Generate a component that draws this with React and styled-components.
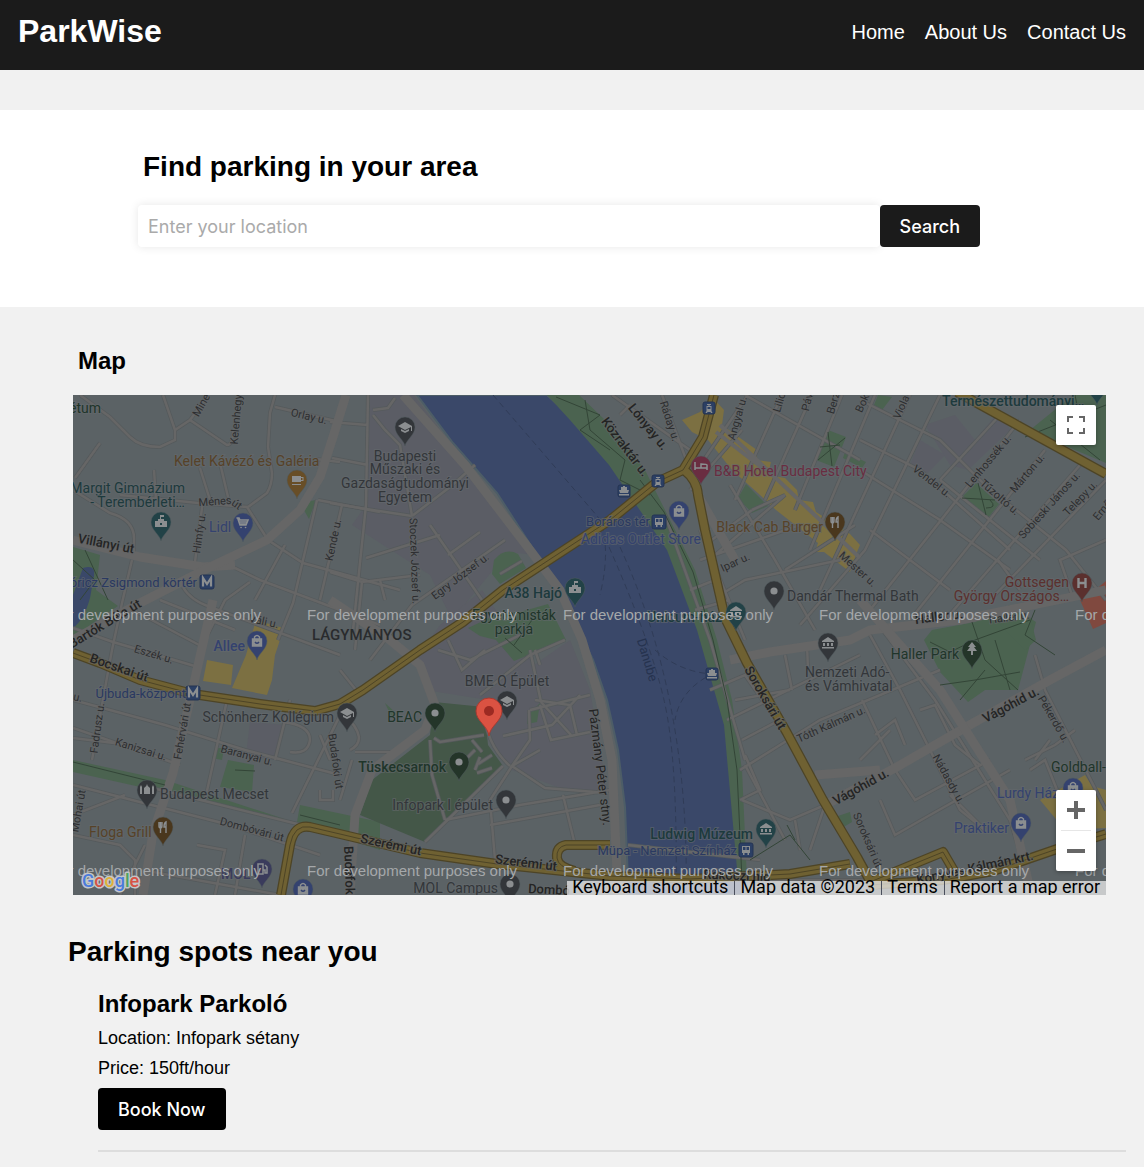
import React from "react";
import styled, { createGlobalStyle } from "styled-components";

const GlobalStyle = createGlobalStyle`
  * { box-sizing: border-box; }
  body {
    margin: 0;
    background: #f1f1f1;
    color: #000;
    font-family: "Liberation Sans", Arial, sans-serif;
  }
  h1, h2, h3, p, ul { margin: 0; padding: 0; }
`;

const Header = styled.header`
  display: flex;
  justify-content: space-between;
  align-items: flex-start;
  min-height: 70px;
  padding: 12px 18px;
  background: #1b1b1b;
  color: #fff;
`;
const Brand = styled.h1`
  font-size: 32px;
  line-height: 38px;
`;
const Nav = styled.nav`
  display: flex;
  gap: 20px;
`;
const NavLink = styled.a`
  color: #fff;
  font-size: 20px;
  line-height: 40px;
  text-decoration: none;
`;

const Hero = styled.section`
  margin-top: 40px;
  padding: 40px 164px 60px 138px;
  background: #fff;
`;
const SectionTitle = styled.h2`
  font-size: 28px;
  line-height: 34px;
`;
const HeroTitle = styled(SectionTitle)`
  margin: 0 0 21px 5px;
`;
const SearchForm = styled.form`
  display: flex;
`;
const LocationInput = styled.input`
  flex: 1;
  min-width: 0;
  height: 42px;
  padding: 0 10px;
  border: 0;
  border-radius: 4px;
  background: #fff;
  box-shadow: 0 0 10px rgba(0, 0, 0, 0.1);
  font-family: Inter, sans-serif;
  font-size: 18px;
  &::placeholder { color: #aaa; opacity: 1; }
`;
const Button = styled.button`
  position: relative;
  height: 42px;
  padding: 0 20px;
  border: 0;
  border-radius: 4px;
  background: ${(p) => p.$tone};
  color: #fff;
  font-family: Inter, sans-serif;
  font-size: 18px;
  font-weight: 500;
  cursor: pointer;
`;

const MapSection = styled.section`
  padding: 38px 38px 0 73px;
`;
const MapTitle = styled.h2`
  margin: 0 0 18px 5px;
  font-size: 24px;
  line-height: 32px;
`;
const MapFrame = styled.div`
  position: relative;
  overflow: hidden;
  background: #5b6265;
`;
const MapCanvas = styled.svg`
  display: block;
  width: 100%;
  height: 500px;
  font-family: Roboto, sans-serif;
`;
const ControlBox = styled.div`
  position: absolute;
  right: 10px;
  ${(p) => (p.$top ? "top: 10px;" : "bottom: 24px;")}
  width: 40px;
  border-radius: 2px;
  background: #fff;
  box-shadow: 0 1px 4px rgba(0, 0, 0, 0.3);
`;
const ControlButton = styled.button`
  display: grid;
  place-items: center;
  width: 40px;
  height: 40px;
  padding: 0;
  border: 0;
  background: none;
  color: #666;
  cursor: pointer;
`;
const ControlRule = styled.div`
  height: 1px;
  margin: 0 5px;
  background: #e6e6e6;
`;
const Attribution = styled.div`
  position: absolute;
  right: 0;
  bottom: 0;
  display: flex;
  height: 14px;
  background: rgba(245, 245, 245, 0.7);
  font-family: Roboto, sans-serif;
  font-size: 18px;
  color: #000;
  white-space: nowrap;
  & > * + * { border-left: 1px solid #4a4f5c; }
`;
const creditStyle = `
  display: block;
  padding: 0 6px 0 5px;
  color: #000;
  font: inherit;
  line-height: 12px;
  text-decoration: none;
`;
const CreditButton = styled.button`
  ${creditStyle}
  height: 12px;
  border-width: 0;
  background: none;
`;
const CreditText = styled.span`${creditStyle}`;
const CreditLink = styled.a`${creditStyle}`;

const Spots = styled.section`
  padding: 40px 18px 15px 68px;
`;
const SpotList = styled.ul`
  padding: 19px 0 0 30px;
  list-style: none;
`;
const Spot = styled.li`
  display: flex;
  flex-direction: column;
  align-items: flex-start;
  padding-bottom: 20px;
  border-bottom: 2px solid #ddd;
`;
const SpotName = styled.h3`
  font-size: 24px;
  line-height: 32px;
  margin-bottom: 8px;
`;
const SpotDetail = styled.p`
  margin-bottom: 10px;
  font-size: 18px;
  line-height: 20px;
`;

/* ---- map palette ---- */
const C = {
  land: "#5b6265",
  campus: "#5b5d65",
  road: "#666",
  water: "#3a4869",
  park: "#4b6350",
  deepPark: "#445748",
  shop: "#7c7042",
  trunk: "#6f6132",
  trunkEdge: "#4d4426",
  path: "#334537",
  gray: "#33363a",
  teal: "#224247",
  tealText: "#1d3a3d",
  blue: "#34426f",
  transit: "#2b3f64",
  transitText: "#2a3961",
  brown: "#684e27",
  darkBrown: "#4a371d",
  brownText: "#574228",
  rose: "#6a2d41",
  hospital: "#5b302e",
  green: "#243529",
  greenText: "#20352a",
  violet: "#3a3b5c",
  glyph: "#8b8e90",
};

const campusAreas = [
  "M370 395H414L470 470 536 555 508 552 452 620 430 575 352 525 366 505Z",
  "M440 625 482 590 534 665 570 640 590 690 608 795 560 788 512 770 486 735 488 700 425 690 415 660Z",
  "M250 722 285 725 274 760 246 755Z",
  "M955 415 975 440 1000 410 1010 430 968 470 950 465 925 425Z",
  "M920 440 945 455 928 473 910 465Z",
];
const parks = [
  "M547 395H579L605 420 645 470 666 512 695 570 717 640 732 700 742 770 747 880H738L724 725 697 630 667 550 609 465 570 420Z",
  "M494 560Q505 547 518 554L526 568 500 584 492 574Z",
  "M468 628 500 613 520 612 548 604 566 640 514 661 496 640 480 636Z",
  "M73 547 100 555 96 590 118 606 90 625 73 645Z",
  "M73 760 165 780 380 850 380 822 300 805 297 822 73 772Z",
  "M216 748H224L222 760 212 758Z",
  "M228 760 254 765 252 792 220 787Z",
  "M300 503 316 500 309 519Z",
  "M746 484 768 506 752 513 738 498Z",
  "M828 430 846 437 834 467 816 460Z",
  "M845 452 866 462 862 468 843 458Z",
  "M878 395 892 397 882 410 874 405Z",
  "M961 498 976 483 999 504 988 518Z",
  "M1030 430 1073 395H1106V463L1075 450Z",
  "M932 630 975 622 1010 605 1036 622 1018 690 985 690 968 702 940 672 924 640Z",
  "M1000 625 1030 617 1036 640 1025 650Z",
  "M835 817 850 812 852 822 842 828Z",
  "M385 703 397 714 392 718Z",
  "M528 715 540 703 537 722 527 724Z",
];
const deepParks = [
  "M434 702 484 707 488 745 503 766 425 842 360 815 372 780 430 735Z",
];
const shops = [
  "M682 420 700 412 713 398 724 410 722 425 740 438 757 450 757 460 771 462 768 475 785 478 797 490 799 500 813 502 816 512 835 524 850 534 860 545 857 552 850 572 824 552 815 552 818 543 776 510 760 495 732 470 708 440 692 432Z",
  "M207 660 233 665 231 685 203 681Z",
  "M256 620 283 628 279 643 275 655 272 680 267 695 232 688 246 655Z",
  "M1040 800 1085 775 1092 786 1106 790V828L1065 830Z",
];
const minorRoads = [
  "M80 395 110 417 130 437Q140 447 160 447L175 440V430L163 395",
  "M175 430 190 420 207 397M190 420 227 445Q233 445 233 430",
  "M275 395 270 413 268 447 272 473Q272 485 267 493L248 507",
  "M275 407 340 422M340 462 316 459M318 500 380 512",
  "M100 443 75 478M73 490 110 513Q135 520 134 540V555",
  "M120 495 198 503 247 507 268 540 303 563 400 590",
  "M203 500 195 562M200 468 210 500M220 463 228 497M154 470 156 500",
  "M317 500 293 603 278 640M342 505 320 600",
  "M132 560 122 603 112 650 92 760M233 567 260 580 380 625",
  "M183 587Q190 600 210 607L340 655M160 600 235 630",
  "M250 582 225 600 205 640M255 600 285 545",
  "M113 642 198 667M127 607 203 647M113 642 73 628",
  "M73 700 165 725 245 750 340 775M73 728 180 765",
  "M73 738 130 745M140 785 330 832",
  "M227 700 205 800M290 700 275 760M345 705 292 813M320 735 330 760",
  "M283 722Q310 725 310 740 308 755 290 752",
  "M73 785 230 825 320 855M73 835 120 845 135 860V895M145 845 120 895M125 795 73 815",
  "M197 845 225 850 215 895M245 835 235 895M153 872 280 895M320 790V800H333V790",
  "M368 395 366 505 352 640M330 422 368 425M332 458 368 465M330 503 366 509 412 516",
  "M412 516 450 487 475 465M366 558 440 535M330 572 362 582 420 575",
  "M373 415 385 430 400 445 412 516M373 410 388 408 395 398",
  "M430 525 482 600M448 555 480 532M362 582 355 650",
  "M505 540 412 605 370 660M380 580 385 600",
  "M448 640 462 670 485 650M438 650 470 660 520 635M500 574 522 561",
  "M480 695 530 655 565 640M530 710 590 695M535 700 570 705 577 735M503 736 552 725 580 695",
  "M540 705 551 740 590 732M541 702 571 735M530 650 541 702 M529 710 530 740 512 766",
  "M540 750 512 766 545 788 608 793M503 766 425 842 M512 766 490 800 495 860",
  "M434 738 440 742 484 735M430 740 432 775 445 820M475 750 460 765M480 757 475 770M492 768 477 773",
  "M484 710Q486 745 510 766M472 740 482 752M492 755 478 764",
  "M445 820 520 805 610 790M490 825 600 805M563 795 575 845",
  "M345 715Q370 740 350 750M355 752 395 752M352 760 340 800M356 690 340 670",
  "M540 665 535 650M630 405 620 415 M612 395 690 450 M662 395 690 470",
  "M748 395 690 480M742 430 690 490 M745 395 860 460",
  "M782 395 735 500M812 395 765 500M842 395 795 510M875 395 810 550M910 395 820 590",
  "M752 510 785 495 715 555M700 560 800 525M730 485 775 560 815 630M785 570 855 525",
  "M720 595 745 580 840 560M940 395 865 550 800 625M752 510 705 545",
  "M860 400 940 440 985 485 1066 550 1106 600M860 470 940 520 1010 570",
  "M1020 420 870 610M1045 450 910 620M1080 465 945 620M1106 480 990 600",
  "M860 440 920 470 1010 550M870 530 950 590M1106 540 1060 560 1072 595",
  "M998 560 1020 590M1000 415 940 480M940 480 965 500 1040 560",
  "M860 600 935 700 1010 820 1025 870M870 635 900 690 960 810 985 830",
  "M710 690 745 675 790 740M735 700 790 690M727 720 860 655M742 740 780 720",
  "M740 770 820 720 940 670M745 765 785 840M785 655 792 690M807 645 808 670",
  "M742 800 790 820 825 805 810 850M795 820 800 850M745 755 760 790 740 800",
  "M862 700 895 770 915 800 990 760M875 735 895 720 905 745M860 760 890 730",
  "M880 800 895 835 930 815M930 815 1010 770M950 795 985 830",
  "M920 710 935 705 955 745 980 765M1030 770 1045 760 1085 860M1035 760 1050 740",
  "M1025 760 1055 745 1075 730M1045 690 1106 810M1035 655 1045 690",
  "M560 873 640 873M628 845 760 860M745 880 870 880M1010 870 1080 835",
  "M700 530 745 640M665 515 710 640 745 760M695 610 730 600M690 590 715 580",
];
const wideRoads = [
  "M73 540 140 557 203 567 235 565",
  "M346 395 333 437 320 477 300 510 267 540 210 567 140 603 73 640",
  "M213 600 193 687 173 773 153 833 143 895",
  "M403 395 465 465 530 550 560 590 582 640 600 700 612 760 618 895",
  "M330 600 390 640 420 665 435 705 425 730 372 770 355 815 350 895",
  "M730 660 770 652 850 640 870 630 960 620 1106 590",
  "M815 775 880 770",
  "M825 805 895 768 975 722 1050 680 1106 650",
  "M695 490 735 560M860 600 940 690 1010 800 1030 890",
];
const trunks = [
  "M73 653 100 663 140 680 193 694 260 704 315 711 340 704 363 690 420 650 463 622 503 590 610 520 657 482 683 470 703 437 714 395",
  "M684 470Q697 480 698 495L705 530 717 583 725 618 747 663 787 733 823 800 857 857 875 890",
  "M281 895 290 845Q294 824 310 827L340 834 420 853 497 864 610 876 690 879 790 874 850 864",
  "M610 845H566Q556 847 557 858 558 867 575 871",
  "M870 882 943 852 957 876M870 885 943 880 993 871 1057 849 1106 834",
  "M957 392 1106 474",
];
const paths = [
  "M556 397 600 415 580 430 610 450M585 400 590 430 625 460 620 480 650 495",
  "M640 480 664 512 693 572 713 640 727 700 737 770 742 880",
  "M818 460 845 438M828 432 832 466M820 447 840 445",
  "M962 498 995 500M978 483 986 515M986 508Q998 508 990 500",
  "M1025 437 1106 405M1075 395 1085 445M1050 420 1100 460",
  "M930 642 950 652 975 640 1030 620M972 622 985 660 1018 690M940 685 975 680 1020 672",
  "M1010 690 995 640M1035 610 1025 635 1055 655M960 700 985 670",
  "M73 762 165 785M300 815 340 825M73 560 95 580 80 600M85 550 108 600",
  "M750 860 790 835 810 860M787 825 795 840M505 638 522 653M514 645 532 620",
  "M235 770 255 771",
];
const ferryLines = [
  "M493 395 598 517Q612 545 600 595",
  "M609 547Q650 640 664 700 678 760 676 895",
  "M620 547Q690 700 686 895",
  "M655 650Q680 672 712 674Q680 690 675 720",
];

const kinds = {
  dot: <circle r="3.6" fill={C.glyph} />,
  cup: <path d="M-5-4H4V-3H6.500V1H4V2H-5ZM4-2V0H5.500V-2ZM-5 4H4V5H-5Z" fill={C.glyph} fillRule="evenodd" />,
  castle: <path d="M-6 5V-1H-3V-3H-1V-7H3V-5H0V-3H3V-1H6V5ZM-1 1V3H1V1Z" fill={C.glyph} fillRule="evenodd" />,
  cart: <path d="M-6-5H-4L-3-3H5L3 2H-3L-5-4M-2 4.500h.1M2.500 4.500h.1M-3-1H4M-2 1H3" fill="none" stroke={C.glyph} strokeWidth="1.600" strokeLinecap="round" />,
  cap: <path d="M-7-1 0-5 7-1V4H6V0L0 3ZM-4 2 0 4 4 2V4L0 6-4 4Z" fill={C.glyph} />,
  bed: <path d="M-6-4V4M-6 2H6V-1Q6-2 0-2V2M-6 2H6V4" fill="none" stroke={C.glyph} strokeWidth="1.500" />,
  bag: (
    <g fill="none" stroke={C.glyph} strokeWidth="1.400">
      <path d="M-2.500-2V-4Q0-7 2.500-4V-2" />
      <path d="M-4.500-2H4.500V5H-4.500Z" fill={C.glyph} />
      <path d="M-2 1Q0 3.500 2 1" stroke="#34426f" />
    </g>
  ),
  fork: <path d="M-4-5V-1Q-4 1-2.500 1T-1-1V-5M-2.500-5V6M3 6V-5Q1-4 1 0H3" fill="none" stroke={C.glyph} strokeWidth="1.400" />,
  museum: <path d="M-6-2 0-6 6-2V-1H-6ZM-5 0H-3V3H-5ZM-1 0H1V3H-1ZM3 0H5V3H3ZM-6 4H6V5.500H-6Z" fill={C.glyph} />,
  hospital: <path d="M-3.500-5V5M3.500-5V5M-3.500 0H3.500" stroke={C.glyph} strokeWidth="2.400" fill="none" />,
  mosque: <path d="M-7 4V-3L-6-5-5-3V4ZM-3 4V-2Q0-4 0-6 0-4 3-2V4ZM5 4V-3L6-5 7-3V4Z" fill={C.glyph} />,
  fuel: <path d="M-4 5V-5H1V5ZM1 1H3V4H5V-2L3-4" fill="none" stroke={C.glyph} strokeWidth="1.500" />,
  tree: <path d="M0-8 4-3H2L5 1H1V5H-1V1H-5L-2-3H-4Z" fill={C.glyph} />,
};

const pins = [
  [297, 480, C.brown, "cup"],
  [161, 522, C.teal, "castle"],
  [243, 523, C.blue, "cart"],
  [405, 427, C.gray, "cap"],
  [575, 588, C.teal, "castle"],
  [701, 466, C.rose, "bed"],
  [679, 511, C.blue, "bag"],
  [835, 522, C.darkBrown, "fork"],
  [774, 591, C.gray, "dot"],
  [736, 612, C.teal, "museum"],
  [1082, 583, C.hospital, "hospital"],
  [1097, 386, C.teal, "dot"],
  [257, 641, C.blue, "bag"],
  [147, 790, C.gray, "mosque"],
  [163, 827, C.darkBrown, "fork"],
  [262, 869, C.violet, "fuel"],
  [303, 889, C.blue, "bag"],
  [347, 713, C.gray, "cap"],
  [435, 713, C.green, "dot"],
  [507, 701, C.gray, "cap"],
  [459, 762, C.green, "dot"],
  [506, 800, C.gray, "dot"],
  [510, 884, C.gray, "dot"],
  [828, 643, C.gray, "museum"],
  [766, 829, C.teal, "museum"],
  [972, 650, C.green, "tree"],
  [1073, 788, C.blue, "bag"],
  [1021, 823, C.blue, "bag"],
];

const stops = [
  [709, 408, "tram"],
  [658, 481, "tram"],
  [624, 491, "ferry"],
  [659, 522, "bus"],
  [712, 674, "ferry"],
  [746, 850, "bus"],
  [207, 582, "metro"],
  [193, 693, "metro"],
];

/* place names: x, baseline, text, colour, anchor, weight */
const places = [
  [101, 413, "étum", C.greenText, "end"],
  [174, 466, "Kelet Kávézó és Galéria", C.brownText],
  [185, 493, "Margit Gimnázium", C.tealText, "end"],
  [185, 507, "- Terembérleti…", C.tealText, "end"],
  [209, 532, "Lidl", C.blue],
  [197, 587, "óricz Zsigmond körtér", C.transitText, "end"],
  [405, 461, "Budapesti", C.gray, "middle"],
  [405, 474, "Műszaki és", C.gray, "middle"],
  [405, 488, "Gazdaságtudományi", C.gray, "middle"],
  [405, 502, "Egyetem", C.gray, "middle"],
  [562, 598, "A38 Hajó", C.tealText, "end", 500],
  [514, 620, "Egyetemisták", C.greenText, "middle"],
  [514, 634, "parkja", C.greenText, "middle"],
  [650, 526, "Boráros tér", C.transitText, "end"],
  [701, 544, "Adidas Outlet Store", C.blue, "end"],
  [714, 476, "B&B Hotel Budapest City", C.rose],
  [823, 532, "Black Cab Burger", C.brownText, "end"],
  [787, 601, "Dandár Thermal Bath", C.gray],
  [722, 622, "Unicum-ház", C.tealText, "end", 500],
  [942, 406, "Természettudományi…", C.tealText, "start", 500],
  [1069, 587, "Gottsegen", C.hospital, "end"],
  [1069, 601, "György Országos…", C.hospital, "end"],
  [245, 651, "Allee", C.blue, "end", 500],
  [186, 698, "Újbuda-központ", C.transitText, "end"],
  [160, 799, "Budapest Mecset", C.gray],
  [89, 837, "Floga Grill", C.brownText],
  [221, 879, "MOL", C.violet, "start", 500],
  [334, 722, "Schönherz Kollégium", C.gray, "end"],
  [422, 722, "BEAC", C.greenText, "end"],
  [507, 686, "BME Q Épület", C.gray, "middle"],
  [446, 772, "Tüskecsarnok", C.greenText, "end", 500],
  [493, 810, "Infopark I épület", C.gray, "end"],
  [498, 893, "MOL Campus", C.gray, "end"],
  [805, 677, "Nemzeti Adó-", C.gray],
  [805, 691, "és Vámhivatal", C.gray],
  [753, 839, "Ludwig Múzeum", C.tealText, "end", 500],
  [737, 855, "Müpa - Nemzeti Színház", C.transitText, "end"],
  [959, 659, "Haller Park", C.greenText, "end"],
  [1106, 772, "Goldball-", C.greenText, "end"],
  [997, 798, "Lurdy Ház", C.blue],
  [1009, 833, "Praktiker", C.blue, "end"],
];

/* street names: centre x, centre y, rotation, text, main street */
const streets = [
  [215, 501, -4, "Ménes"],
  [237, 504, 35, "út"],
  [199, 533, -82, "Himfy u."],
  [201, 405, -60, "Mine"],
  [236, 418, -85, "Kelenhegyi"],
  [309, 416, 13, "Orlay u."],
  [106, 544, 11, "Villányi út", 1],
  [333, 540, -78, "Kende u."],
  [415, 561, 88, "Stoczek József u."],
  [460, 576, -37, "Egry József u."],
  [648, 427, 51, "Lónyay u.", 1],
  [625, 447, 53, "Közraktár u.", 1],
  [670, 421, 72, "Ráday u."],
  [737, 418, -74, "Angyal u."],
  [779, 402, -74, "Lilio"],
  [807, 402, -76, "Páv"],
  [833, 403, -74, "Berz"],
  [862, 403, -66, "Bok"],
  [901, 407, -66, "Viola"],
  [735, 562, -25, "Ipar u."],
  [858, 569, 42, "Mester u."],
  [932, 481, 38, "Vendel u."],
  [988, 461, -50, "Lenhossék u."],
  [1000, 497, 41, "Tűzoltó u."],
  [1027, 473, -50, "Márton u."],
  [1049, 505, -48, "Sobieski János u."],
  [1080, 498, -46, "Telepy u."],
  [1102, 510, -50, "Ernő"],
  [939, 617, -7, "Haller u.", 1],
  [1009, 617, -7, "Haller u."],
  [105, 624, -31, "Bartók Béla út", 1],
  [154, 654, 17, "Eszék u."],
  [264, 621, 12, "Váli u."],
  [119, 668, 19, "Bocskai út", 1],
  [78, 697, 12, "u."],
  [97, 728, -82, "Fadrusz u."],
  [141, 749, 17, "Kanizsai u."],
  [182, 731, -80, "Fehérvári út"],
  [247, 755, 15, "Baranyai u."],
  [78, 811, -80, "Mohai út"],
  [252, 829, 15, "Dombóvári út"],
  [336, 761, 82, "Budafoki út"],
  [349, 872, 88, "Budafoki", 1],
  [391, 845, 12, "Szerémi út", 1],
  [526, 863, 7, "Szerémi út", 1],
  [600, 767, 83, "Pázmány Péter stny.", 2],
  [765, 698, 60, "Soroksári út", 1],
  [831, 724, -24, "Tóth Kálmán u."],
  [861, 787, -29, "Vágóhíd u.", 1],
  [1011, 705, -28, "Vágóhíd u.", 1],
  [868, 840, 67, "Soroksári út"],
  [1054, 719, 60, "Pékerdő u."],
  [949, 779, 61, "Nádasdy u."],
  [975, 868, -12, "Könyves Kálmán krt.", 1],
  [737, 876, 2, "Rákóczi híd", 1],
  [549, 890, 3, "Dombó", 1],
];

const Pin = ({ x, y, color, kind }) => (
  <g transform={`translate(${x} ${y})`}>
    <path d="M0 19C-1 13-10 8-10 0A10 10 0 0 1 10 0C10 8 1 13 0 19Z" fill={color} stroke="#515a5e" strokeWidth="0.500" />
    {kinds[kind]}
  </g>
);

const Stop = ({ x, y, kind }) => {
  const half = kind === "tram" || kind === "ferry" ? 6 : 7;
  return (
    <g transform={`translate(${x} ${y})`}>
      <rect x={-half} y={-half} width={half * 2} height={half * 2} rx="2" fill={C.transit} stroke="#253453" />
      {kind === "metro" && <path d="M-4 4.500V-4L0 2 4-4V4.500" fill="none" stroke={C.glyph} strokeWidth="2.200" />}
      {kind === "bus" && <path d="M-4-4H4V3H3V5H1.500V3H-1.500V5H-3V3H-4ZM-3-3V0H-.5V-3ZM.5-3V0H3V-3Z" fill={C.glyph} fillRule="evenodd" />}
      {kind === "tram" && <path d="M-2-4H2V-3H.5V-2H2.500V3L3.500 5H2L1.500 4H-1.500L-2 5H-3.500L-2.500 3V-2H-.5V-3H-2ZM-1.500-1V1H1.500V-1Z" fill={C.glyph} fillRule="evenodd" />}
      {kind === "ferry" && <path d="M-1-5H1V-4H3V-1H5L4 2H-4L-5-1H-3V-4H-1ZM-5 3H5V4.500H-5Z" fill={C.glyph} />}
    </g>
  );
};

const CityMap = () => (
  <MapCanvas viewBox="73 395 1033 500" preserveAspectRatio="xMidYMid slice" role="img" aria-label="Map of Budapest around Infopark">
    <rect x="73" y="395" width="1033" height="500" fill={C.land} />
    <g fill={C.campus}>{campusAreas.map((d) => <path key={d} d={d} />)}</g>
    <path
      d="M417 395 453 443 497 493 537 555 563 603 577 627 593 660 607 700 618 750 625 807 628 880V895H742V877L737 787 727 717 713 667 697 617 687 590 670 550 640 500 610 462 577 422 547 395Z"
      fill={C.water}
      stroke="#4d5d67"
      strokeWidth="2"
    />
    <g fill={C.park}>{parks.map((d) => <path key={d} d={d} />)}</g>
    <g fill={C.deepPark}>{deepParks.map((d) => <path key={d} d={d} />)}</g>
    <g fill={C.shop}>{shops.map((d) => <path key={d} d={d} />)}</g>
    <path d="M1095 590 1106 581V623L1093 629 1080 600Z" fill="#80493f" />
    <path d="M83 568Q96 564 94 576L90 598Q84 620 73 628V595Z" fill={C.water} />
    <g fill="none" stroke="#303c57" strokeDasharray="6 4">{ferryLines.map((d) => <path key={d} d={d} />)}</g>
    <g fill="none" stroke="#555a5c" strokeWidth="4">{minorRoads.map((d) => <path key={d} d={d} />)}</g>
    <g fill="none" stroke={C.road} strokeWidth="2.500">{minorRoads.map((d) => <path key={d} d={d} />)}</g>
    <g fill="none" stroke={C.road} strokeWidth="9" strokeLinejoin="round">{wideRoads.map((d) => <path key={d} d={d} />)}</g>
    <g fill="none" stroke={C.path} strokeWidth="1">{paths.map((d) => <path key={d} d={d} />)}</g>
    <g fill="none" stroke={C.trunkEdge} strokeWidth="10" strokeLinejoin="round">{trunks.map((d) => <path key={d} d={d} />)}</g>
    <g fill="none" stroke={C.trunk} strokeWidth="7.500" strokeLinejoin="round">{trunks.map((d) => <path key={d} d={d} />)}</g>
    <g fill="none" stroke={C.trunkEdge} strokeWidth="1">
      {[trunks[0], trunks[2], trunks[3], trunks[4]].map((d) => <path key={d} d={d} />)}
    </g>
    <path d="M720 425 860 558M716 432 765 470" fill="none" stroke={C.road} strokeWidth="4" />

    {streets.map(([x, y, angle, name, main]) => (
      <text
        key={`${name}${x}`}
        transform={`translate(${x} ${y}) rotate(${angle})`}
        y="4"
        textAnchor="middle"
        fontSize={main ? 13 : 11}
        fontWeight={main === 1 ? 500 : 400}
        fill={main ? "#242424" : "#2d2e30"}
        stroke="#626567"
        strokeWidth="2"
        strokeOpacity="0.700"
        paintOrder="stroke"
      >
        {name}
      </text>
    ))}
    <text transform="translate(647 660) rotate(73)" y="4" textAnchor="middle" fontSize="13" fill="#26334f">Danube</text>
    <text x="312" y="640" fontSize="15" fontWeight="500" fill="#292b2d">LÁGYMÁNYOS</text>

    {pins.map(([x, y, color, kind]) => <Pin key={`${x}-${y}`} x={x} y={y} color={color} kind={kind} />)}
    {stops.map(([x, y, kind]) => <Stop key={`${x}-${y}`} x={x} y={y} kind={kind} />)}
    {places.map(([x, y, name, color, anchor = "start", weight = 400]) => (
      <text
        key={name}
        x={x}
        y={y}
        textAnchor={anchor}
        fontSize={color === C.transitText ? 13 : 14}
        fontWeight={weight}
        fill={color}
        stroke="#64696d"
        strokeWidth="2"
        strokeOpacity="0.600"
        paintOrder="stroke"
      >
        {name}
      </text>
    ))}

    <g transform="translate(489 711)">
      <path d="M0 25C-1 15-13 10-13 0A13 13 0 0 1 13 0C13 10 1 15 0 25Z" fill="#db5242" stroke="#a93a30" />
      <circle r="5" fill="#9c2a22" />
    </g>

    <g fontFamily="Liberation Sans, Arial, sans-serif" fontSize="15" fill="#a5a8aa">
      {[620, 876].map((y) =>
        [51, 307, 563, 819, 1075].map((x) => (
          <text key={`${x}-${y}`} x={x} y={y}>For development purposes only</text>
        ))
      )}
    </g>
    <text x="82" y="887" fontSize="18" fontWeight="500" stroke="#c3c6c8" strokeWidth="3" strokeLinejoin="round" paintOrder="stroke">
      <tspan fill="#4a7bdc">G</tspan>
      <tspan fill="#d65345">o</tspan>
      <tspan fill="#dfb138">o</tspan>
      <tspan fill="#4a7bdc">g</tspan>
      <tspan fill="#4da35f">l</tspan>
      <tspan fill="#d65345">e</tspan>
    </text>
  </MapCanvas>
);

export default function App() {
  return (
    <>
      <GlobalStyle />
      <Header>
        <Brand>ParkWise</Brand>
        <Nav>
          <NavLink href="#home">Home</NavLink>
          <NavLink href="#about">About Us</NavLink>
          <NavLink href="#contact">Contact Us</NavLink>
        </Nav>
      </Header>
      <main>
        <Hero>
          <HeroTitle><label htmlFor="location">Find parking in your area</label></HeroTitle>
          <SearchForm onSubmit={(e) => e.preventDefault()}>
            <LocationInput id="location" type="text" placeholder="Enter your location" />
            <Button type="submit" $tone="#1b1b1b">Search</Button>
          </SearchForm>
        </Hero>
        <MapSection>
          <MapTitle>Map</MapTitle>
          <MapFrame>
            <CityMap />
            <ControlBox $top>
              <ControlButton type="button" aria-label="Toggle fullscreen view">
                <svg width="18" height="18" viewBox="0 0 18 18" fill="currentColor">
                  <path d="M0 0V6H2V2H6V0ZM12 0V2H16V6H18V0ZM0 12V18H6V16H2V12ZM16 12V16H12V18H18V12Z" />
                </svg>
              </ControlButton>
            </ControlBox>
            <ControlBox>
              <ControlButton type="button" aria-label="Zoom in">
                <svg width="18" height="18" viewBox="0 0 18 18" fill="currentColor">
                  <path d="M7 0H11V7H18V11H11V18H7V11H0V7H7Z" />
                </svg>
              </ControlButton>
              <ControlRule />
              <ControlButton type="button" aria-label="Zoom out">
                <svg width="18" height="18" viewBox="0 0 18 18" fill="currentColor">
                  <path d="M0 7H18V11H0Z" />
                </svg>
              </ControlButton>
            </ControlBox>
            <Attribution>
              <CreditButton type="button">Keyboard shortcuts</CreditButton>
              <CreditText>Map data ©2023</CreditText>
              <CreditLink href="#terms">Terms</CreditLink>
              <CreditLink href="#report">Report a map error</CreditLink>
            </Attribution>
          </MapFrame>
        </MapSection>
        <Spots>
          <SectionTitle>Parking spots near you</SectionTitle>
          <SpotList>
            <Spot>
              <SpotName>Infopark Parkoló</SpotName>
              <SpotDetail>Location: Infopark sétany</SpotDetail>
              <SpotDetail>Price: 150ft/hour</SpotDetail>
              <Button type="button" $tone="#000">Book Now</Button>
            </Spot>
          </SpotList>
        </Spots>
      </main>
    </>
  );
}
